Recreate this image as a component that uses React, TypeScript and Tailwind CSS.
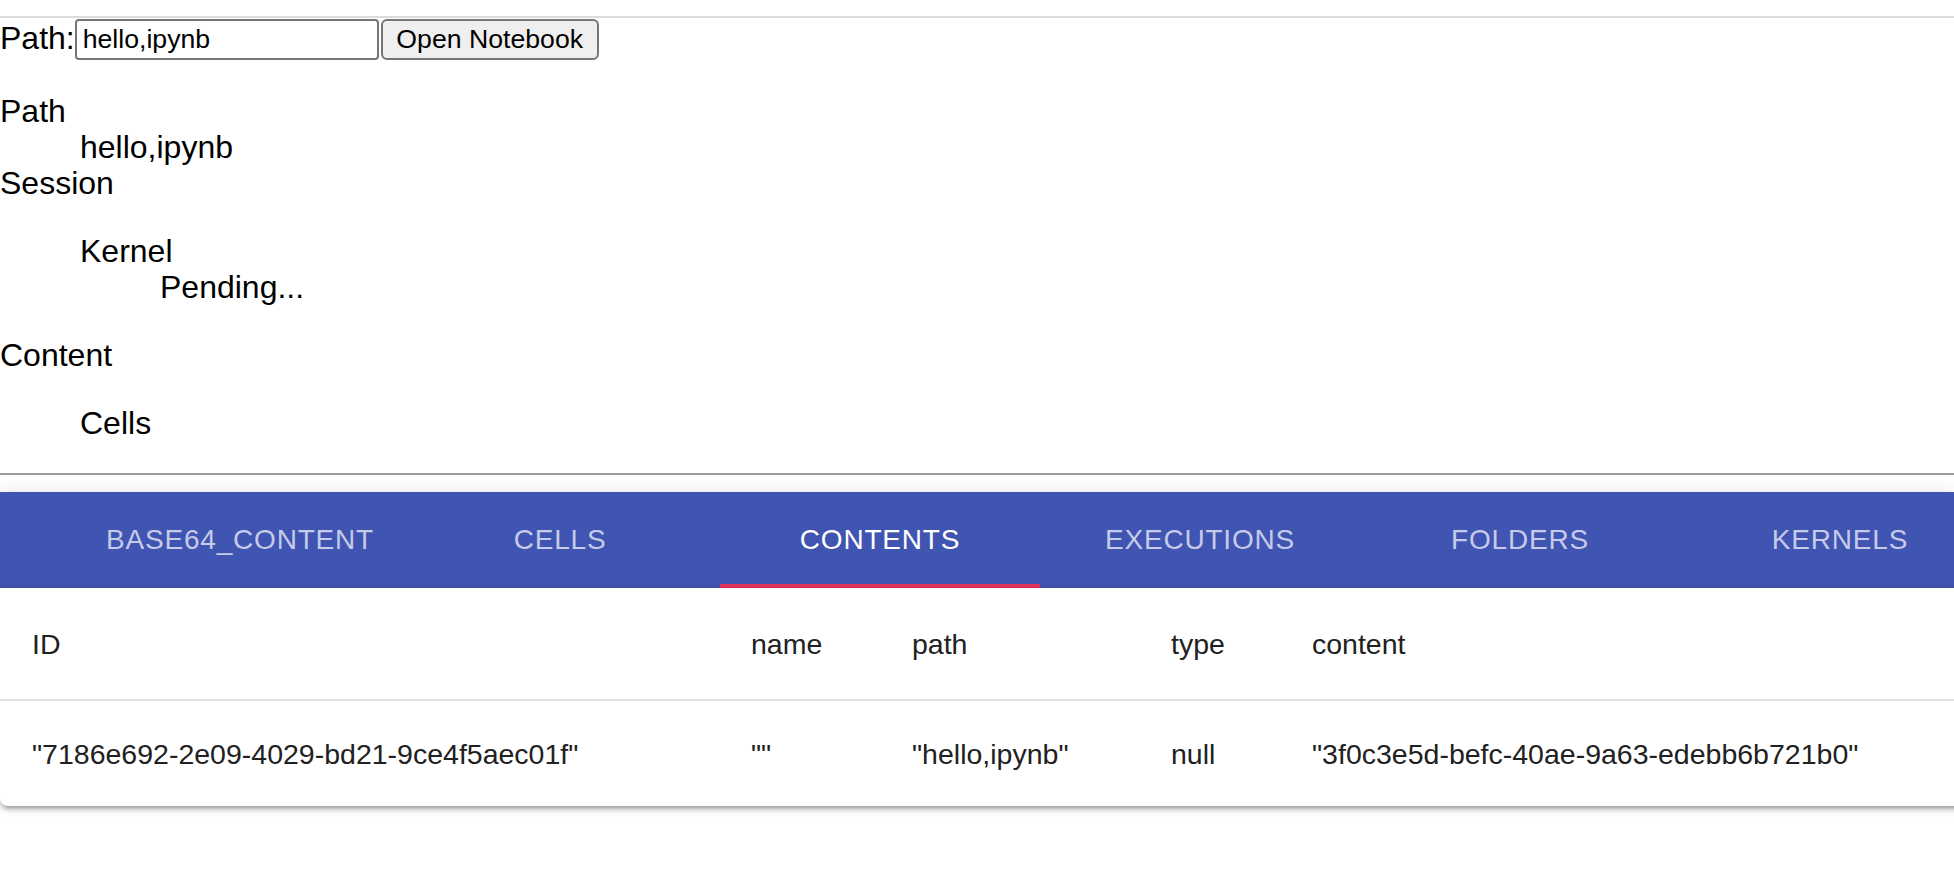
import { useState } from "react";

const tabs = ["base64_content", "cells", "contents", "executions", "folders", "kernels"];

const columns = [
  { key: "id", label: "ID", width: "w-[719px]" },
  { key: "name", label: "name", width: "w-[161px]" },
  { key: "path", label: "path", width: "w-[259px]" },
  { key: "type", label: "type", width: "w-[141px]" },
  { key: "content", label: "content", width: "flex-1" },
];

const rows = [
  {
    id: '"7186e692-2e09-4029-bd21-9ce4f5aec01f"',
    name: '""',
    path: '"hello,ipynb"',
    type: "null",
    content: '"3f0c3e5d-befc-40ae-9a63-edebb6b721b0"',
  },
];

export default function App() {
  const [path, setPath] = useState("hello,ipynb");
  const [active, setActive] = useState("contents");

  return (
    <div className="min-h-screen overflow-x-hidden bg-white text-black font-['Liberation_Sans',Arial,sans-serif] text-[32px] leading-[36px]">
      <div className="h-[16px]" />
      <div className="border-t-2 border-[#dcdcdc]" />

      <form className="flex h-[43px] items-start pt-[1px]" onSubmit={(e) => e.preventDefault()}>
        <label htmlFor="path" className="leading-[38px]">
          Path:
        </label>
        <input
          id="path"
          value={path}
          onChange={(e) => setPath(e.target.value)}
          className="h-[41px] w-[304px] rounded-[4px] border-2 border-[#767676] px-[6px] text-[26.67px] leading-none outline-none"
        />
        <button
          type="submit"
          className="ml-[2px] h-[41px] w-[218px] rounded-[6px] border-2 border-[#767676] bg-[#efefef] text-[26.67px] leading-none"
        >
          Open Notebook
        </button>
      </form>

      <dl className="mt-[32px] mb-[30px]">
        <dt>Path</dt>
        <dd className="ml-[80px]">{path}</dd>
        <dt>Session</dt>
        <dd className="ml-[80px]">
          <dl className="my-[32px]">
            <dt>Kernel</dt>
            <dd className="ml-[80px]">Pending...</dd>
          </dl>
        </dd>
        <dt>Content</dt>
        <dd className="ml-[80px]">
          <dl className="my-[32px]">
            <dt>Cells</dt>
          </dl>
        </dd>
      </dl>

      <div className="border-t-2 border-[#9b9b9b]" />
      <div className="h-[17px]" />

      <div className="relative z-10 flex h-[96px] overflow-hidden bg-[#4054b2] pl-[80px] shadow-[0_4px_8px_-2px_rgba(0,0,0,0.2),0_8px_10px_0_rgba(0,0,0,0.14),0_2px_20px_0_rgba(0,0,0,0.12)]">
        {tabs.map((t) => (
          <button
            key={t}
            onClick={() => setActive(t)}
            className={`relative flex w-[320px] shrink-0 items-center justify-center text-[28px] uppercase tracking-[0.8px] ${
              active === t ? "text-white" : "text-[#c5cbe9]"
            }`}
          >
            {t}
            {active === t && <span className="absolute bottom-0 left-0 h-[4px] w-full bg-[#e33459]" />}
          </button>
        ))}
      </div>

      {/* paper runs past the right edge, like the original */}
      <div className="relative z-20 w-[calc(100%+16px)] rounded-bl-[8px] bg-white text-[28.5px] text-[#212121] shadow-[0_2px_10px_rgba(0,0,0,0.2),0_4px_4px_rgba(0,0,0,0.14),0_6px_2px_-4px_rgba(0,0,0,0.12)]">
        <div className="flex h-[113px] items-center border-b-2 border-[#e0e0e0]">
          {columns.map((c) => (
            <div key={c.key} className={`${c.width} shrink-0 px-[32px]`}>
              {c.label}
            </div>
          ))}
        </div>
        {rows.map((r) => (
          <div key={r.id} className="flex h-[105px] items-center">
            {columns.map((c) => (
              <div key={c.key} className={`${c.width} shrink-0 whitespace-nowrap px-[32px]`}>
                {r[c.key as keyof typeof r]}
              </div>
            ))}
          </div>
        ))}
      </div>
    </div>
  );
}
